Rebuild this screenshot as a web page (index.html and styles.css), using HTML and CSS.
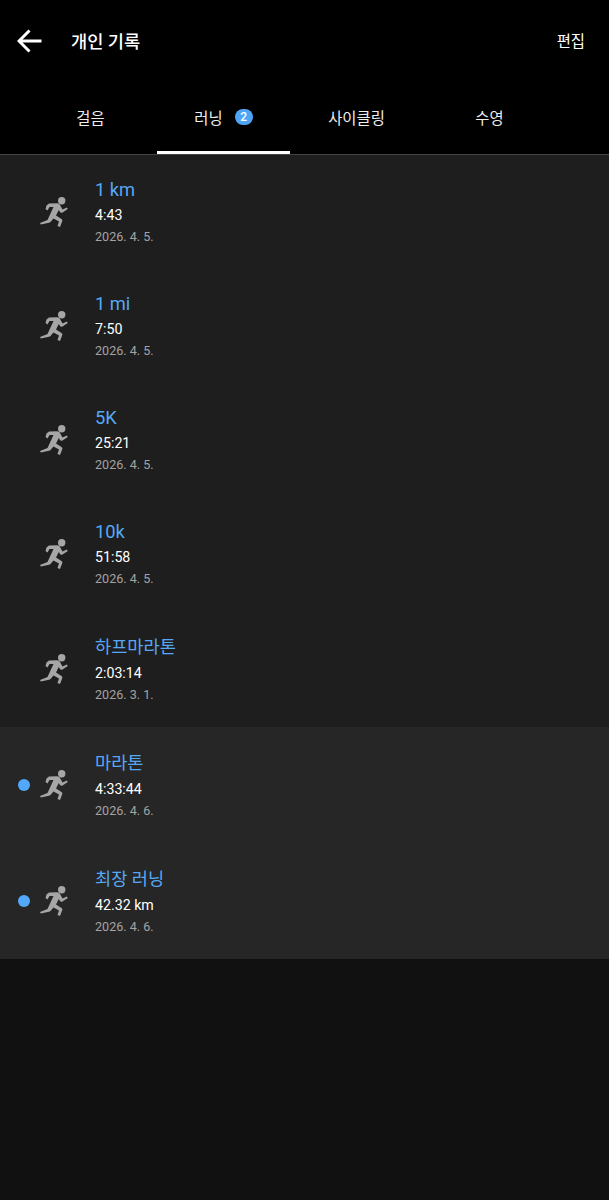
FILE: index.html
```html
<!DOCTYPE html>
<html lang="ko">
<head>
    <meta charset="UTF-8">
    <meta name="viewport" content="width=device-width, initial-scale=1.0">
    <title>개인 기록</title>
    <link rel="stylesheet" href="styles.css">
</head>
<body>
    <svg class="icon-defs" width="0" height="0">
        <symbol id="run" viewBox="0 0 28 30">
            <circle cx="21.7" cy="3.8" r="3.7"/>
            <path d="M6.5 8.5 L9 6.6 L17 6.2 C18.5 6.2 19.5 7 20 8 L22.5 12.5 L26.8 10.5 L27.8 12 L22.5 15.5 C21.5 16 20.5 15.8 20 15 L18.8 13 L16 18.5 L21.5 22 C22.3 22.6 22.5 23.3 22.3 24 L20 30 L17.5 29 L19 24.5 L13.5 21.5 L10.5 25 C10 25.6 9.5 25.8 9 25.8 L0.8 27.5 L0 26 L7.5 23 L13.5 10 L9.5 10 L7.5 13.5 L5.5 12 Z"/>
        </symbol>
    </svg>

    <header class="top-bar">
        <svg class="back-icon" viewBox="0 0 26 26" width="26" height="26">
            <path d="M24.5 13 H2.5 M12.5 2.5 L2 13 L12.5 23.5"/>
        </svg>
        <h1 class="page-title">개인 기록</h1>
        <span class="edit-link">편집</span>
    </header>

    <nav class="tabs">
        <div class="tab">걸음</div>
        <div class="tab tab-active">러닝<span class="badge">2</span></div>
        <div class="tab">사이클링</div>
        <div class="tab">수영</div>
    </nav>

    <main class="records">
        <div class="record">
            <span class="dot-slot"></span>
            <svg class="run-icon"><use href="#run"/></svg>
            <div class="record-text">
                <div class="record-name">1 km</div>
                <div class="record-value">4:43</div>
                <div class="record-date">2026. 4. 5.</div>
            </div>
        </div>
        <div class="record">
            <span class="dot-slot"></span>
            <svg class="run-icon"><use href="#run"/></svg>
            <div class="record-text">
                <div class="record-name">1 mi</div>
                <div class="record-value">7:50</div>
                <div class="record-date">2026. 4. 5.</div>
            </div>
        </div>
        <div class="record">
            <span class="dot-slot"></span>
            <svg class="run-icon"><use href="#run"/></svg>
            <div class="record-text">
                <div class="record-name">5K</div>
                <div class="record-value">25:21</div>
                <div class="record-date">2026. 4. 5.</div>
            </div>
        </div>
        <div class="record">
            <span class="dot-slot"></span>
            <svg class="run-icon"><use href="#run"/></svg>
            <div class="record-text">
                <div class="record-name">10k</div>
                <div class="record-value">51:58</div>
                <div class="record-date">2026. 4. 5.</div>
            </div>
        </div>
        <div class="record record-tall">
            <span class="dot-slot"></span>
            <svg class="run-icon"><use href="#run"/></svg>
            <div class="record-text">
                <div class="record-name">하프마라톤</div>
                <div class="record-value">2:03:14</div>
                <div class="record-date">2026. 3. 1.</div>
            </div>
        </div>
        <div class="record record-tall record-new">
            <span class="dot-slot"><span class="dot"></span></span>
            <svg class="run-icon"><use href="#run"/></svg>
            <div class="record-text">
                <div class="record-name">마라톤</div>
                <div class="record-value">4:33:44</div>
                <div class="record-date">2026. 4. 6.</div>
            </div>
        </div>
        <div class="record record-tall record-new">
            <span class="dot-slot"><span class="dot"></span></span>
            <svg class="run-icon"><use href="#run"/></svg>
            <div class="record-text">
                <div class="record-name">최장 러닝</div>
                <div class="record-value">42.32 km</div>
                <div class="record-date">2026. 4. 6.</div>
            </div>
        </div>
    </main>
</body>
</html>
```

FILE: styles.css
```css
html, body {
    height: 100%;
}

body {
    margin: 0;
    min-height: 1200px;
    background-color: #111111;
    color: #fff;
    font-family: Roboto, "Noto Sans CJK KR", sans-serif;
    overflow: hidden;
}

.icon-defs {
    display: block;
    height: 0;
}

.top-bar {
    display: flex;
    align-items: center;
    height: 82px;
    padding: 0 24px 0 17px;
    background-color: #000;
}

.back-icon {
    flex: none;
    fill: none;
    stroke: #fff;
    stroke-width: 3;
    margin-right: 28px;
}

.page-title {
    margin: 0 0 2px;
    flex: 1;
    font-size: 17.6px;
    font-weight: 500;
}

.edit-link {
    margin-bottom: 2px;
    font-size: 15.4px;
}

.tabs {
    display: flex;
    height: 72px;
    padding-left: 24px;
    background-color: #000;
    border-bottom: 1px solid #444;
    box-sizing: content-box;
}

.tab {
    width: 133px;
    display: flex;
    align-items: center;
    justify-content: center;
    height: 72px;
    padding-bottom: 2px;
    box-sizing: border-box;
    font-size: 15.4px;
    color: #eee;
}

.tab-active {
    border-bottom: 3px solid #fff;
    padding-bottom: 0;
}

.badge {
    width: 18px;
    height: 16px;
    margin-left: 12px;
    border-radius: 8px;
    background-color: #4ea5f5;
    color: #fff;
    font-size: 12px;
    font-weight: 500;
    line-height: 16px;
    text-align: center;
}

.records {
    background-color: #1e1e1e;
}

.record {
    display: flex;
    align-items: center;
    height: 113.9px;
}

.record-tall {
    height: 116.2px;
}

.record-new {
    background-color: #262626;
}

.dot-slot {
    width: 40px;
    flex: none;
    display: flex;
    padding-left: 18px;
    box-sizing: border-box;
}

.dot {
    width: 12px;
    height: 12px;
    border-radius: 50%;
    background-color: #52a8fb;
}

.run-icon {
    width: 28px;
    height: 30px;
    flex: none;
    fill: #a6a6a6;
    margin-right: 27px;
}

.record-tall .record-text {
    padding-top: 1px;
}

.record-name {
    font-size: 18.3px;
    line-height: 24px;
    color: #56a8f5;
}

.record-tall .record-name {
    font-size: 17.6px;
    line-height: 22px;
}

.record-value {
    margin-top: 3px;
    font-size: 14.2px;
    line-height: 20px;
}

.record-tall .record-value {
    margin-top: 5px;
}

.record-date {
    margin-top: 4px;
    font-size: 12.6px;
    line-height: 16px;
    color: #a3a3a3;
}
```
